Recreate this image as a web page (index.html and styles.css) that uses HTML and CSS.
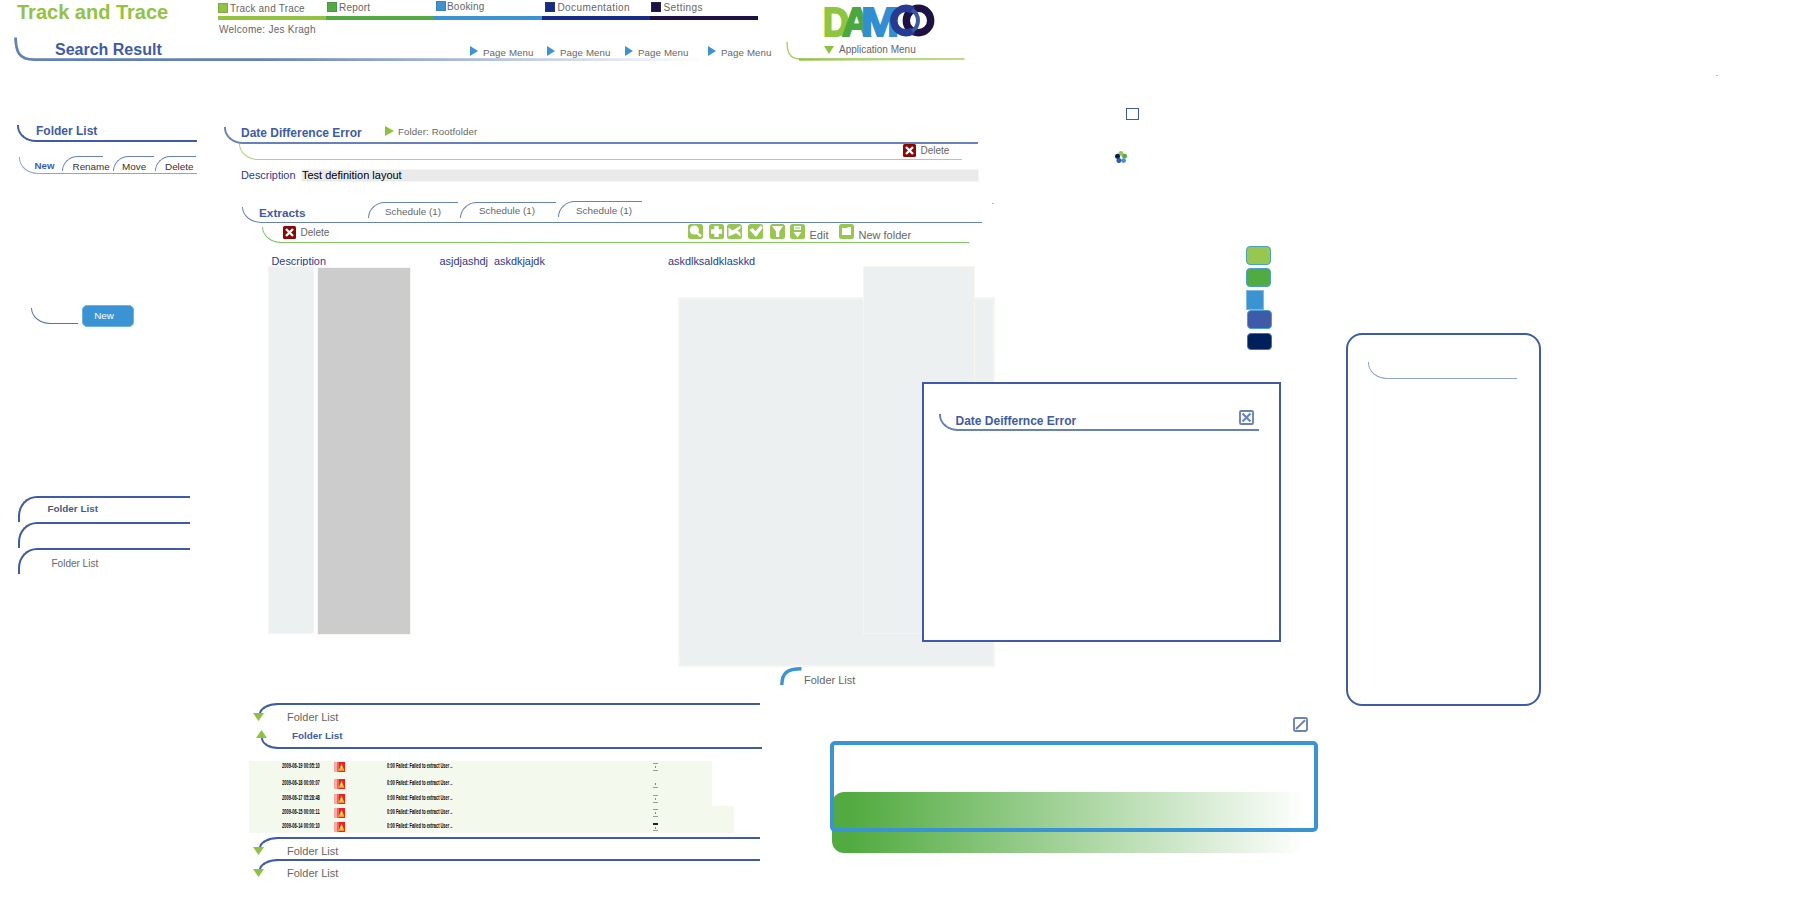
FILE: index.html
```html
<!DOCTYPE html>
<html lang="en">
<head>
<meta charset="utf-8">
<title>Track and Trace</title>
<link rel="stylesheet" href="styles.css">
</head>
<body>
<svg class="defs" width="0" height="0" aria-hidden="true">
  <defs>
    <symbol id="i-del" viewBox="0 0 13 13"><rect width="13" height="13" rx="1.5" fill="#900505"/><path d="M3 3l7 7M10 3l-7 7" stroke="#fff" stroke-width="2.4"/></symbol>
    <symbol id="i-alert" viewBox="0 0 11 10"><rect width="4" height="10" fill="#f9a8a4"/><rect x="3" width="3" height="10" fill="#f4625e"/><rect x="5" width="6" height="10" fill="#f41c1c"/><path d="M4.5 8.8L7.6 1.6 10.4 8.8z" fill="#fbb62d"/><path d="M7.5 4v2.6" stroke="#fff" stroke-width="1"/></symbol>
  </defs>
</svg>
<div class="board">
  <header class="header">
    <div class="head-left">
      <div class="head-top">
        <h1 class="brand">Track and Trace</h1>
        <div>
          <nav class="nav">
            <a class="nav-item n1"><i></i>Track and Trace</a>
            <a class="nav-item n2"><i></i>Report</a>
            <a class="nav-item n3"><i></i>Booking</a>
            <a class="nav-item n4"><i></i>Documentation</a>
            <a class="nav-item n5"><i></i>Settings</a>
          </nav>
          <p class="welcome">Welcome: Jes Kragh</p>
        </div>
      </div>
      <div class="search">
        <svg class="search-line" width="700" height="25" viewBox="0 0 700 25">
          <defs><linearGradient id="sl" gradientUnits="userSpaceOnUse" x1="240" y1="0" x2="690" y2="0"><stop offset="0" stop-color="#6480bb"/><stop offset="1" stop-color="#fff"/></linearGradient></defs>
          <path d="M1.5 0.5C2 15 5 22.5 20 22.6H246" fill="none" stroke="#6480bb" stroke-width="2.8"/>
          <rect x="246" y="21.2" width="454" height="2.8" fill="url(#sl)"/>
        </svg>
        <h2 class="search-title">Search Result</h2>
        <div class="page-menu">
          <a class="pm"><i></i>Page Menu</a>
          <a class="pm"><i></i>Page Menu</a>
          <a class="pm"><i></i>Page Menu</a>
          <a class="pm"><i></i>Page Menu</a>
        </div>
      </div>
    </div>
    <div class="head-app">
      <svg class="logo" width="114" height="34" viewBox="0 0 114 34" role="img" aria-label="DAMCO">
        <g class="logo-t">
          <text x="0" y="31.5" textLength="26" lengthAdjust="spacingAndGlyphs" fill="#8fc63f" stroke="#8fc63f">D</text>
          <text x="19" y="31.5" textLength="29" lengthAdjust="spacingAndGlyphs" fill="#4aa83f" stroke="#4aa83f">A</text>
          <text x="38" y="31.5" textLength="38" lengthAdjust="spacingAndGlyphs" fill="#2f8fd2" stroke="#2f8fd2">M</text>
        </g>
        <circle cx="95.500" cy="16.500" r="12.200" fill="none" stroke="#1d1145" stroke-width="7.400"/>
        <path d="M90 26.500A12.200 12.200 0 1 1 90 6.500" fill="none" stroke="#263c93" stroke-width="7.400"/>
        <path d="M89 6A12.200 12.200 0 0 1 89 27" fill="none" stroke="#3d57a7" stroke-width="4"/>
      </svg>
      <div class="app-menu">
        <svg class="app-line" width="180" height="20" viewBox="0 0 180 20">
          <defs><linearGradient id="al"><stop offset="0" stop-color="#8fc043"/><stop offset="1" stop-color="#b9da86" stop-opacity=".1"/></linearGradient></defs>
          <path d="M1 0C1.2 10 3 16.8 14 17H178.5" fill="none" stroke="#a5ce62" stroke-width="1.3"/>
          <rect x="13" y="16.5" width="150" height="2.2" fill="url(#al)"/>
        </svg>
        <i></i><span>Application Menu</span>
      </div>
    </div>
  </header>

  <div class="body">
    <aside class="side">
      <h3 class="rail side-title">Folder List</h3>
      <div class="rail side-tabs">
        <b class="side-new">New</b>
        <a class="cap st st1">Rename</a>
        <a class="cap st st2">Move</a>
        <a class="cap st st3">Delete</a>
      </div>
      <div class="new-row"><span class="rail new-rail"></span><button class="new-btn">New</button></div>
      <div class="cap fold fold-b">Folder List</div>
      <div class="cap fold"></div>
      <div class="cap fold fold-n">Folder List</div>
    </aside>

    <main class="main">
      <div class="rail def-title"><h3>Date Difference Error</h3><i class="tri-r"></i><span>Folder: Rootfolder</span></div>
      <div class="rail def-tools"><svg width="13" height="13"><use href="#i-del"/></svg><span>Delete</span></div>
      <div class="desc"><label>Description</label><span class="field">Test definition layout</span></div>
      <div class="rail ext"><h3>Extracts</h3>
        <a class="cap et et1">Schedule (1)</a><a class="cap et et2">Schedule (1)</a><a class="cap et et3">Schedule (1)</a>
      </div>
      <div class="rail ext-tools">
        <svg class="x" width="13" height="13"><use href="#i-del"/></svg><span class="x-label">Delete</span>
        <div class="icons">
          <svg class="ic" viewBox="0 0 15 15"><circle cx="6.3" cy="6" r="4.6"/><path d="M9 9l4 3.2" stroke="#fff" stroke-width="2.6"/></svg>
          <svg class="ic ic2" viewBox="0 0 15 15"><path d="M5.3 2h4.4v3.3H13v4.4H9.700V13H5.300V9.700H2V5.300h3.300z"/></svg>
          <svg class="ic ic3" viewBox="0 0 15 15"><path d="M13.500 1.500L5.500 6.500 13.500 12.500V9L10.500 6.500l3-2z"/><path d="M1.500 3.500v9l8-3.500z"/></svg>
          <svg class="ic ic4" viewBox="0 0 15 15"><path d="M1.500 6l3-2 3 3.300L12.500 1.500 15 3.500 8 13z"/></svg>
          <svg class="ic ic5" viewBox="0 0 15 15"><path d="M2 2h11L9.300 7.500V13H6V7.500z"/></svg>
          <svg class="ic ic6" viewBox="0 0 15 15"><path d="M4 2h7v4H4zM3.500 8h8L7.500 13.500z"/><path d="M5 4h5" stroke="#98c74f"/></svg>
          <span>Edit</span>
          <svg class="ic ic7" viewBox="0 0 15 15"><path d="M3 4h5l1-1h3v8H3z"/></svg>
          <span>New folder</span>
        </div>
      </div>
      <div class="cols"><span>Description</span><span>asjdjashdj&nbsp; askdkjajdk</span><span>askdlksaldklaskkd</span></div>
      <div class="blocks"><div class="blk"></div><div class="blk blk-grey"></div></div>

      <section class="acc">
        <div class="cap acc-h"><i class="tri-d"></i>Folder List</div>
        <div class="rail acc-open"><i class="tri-u"></i>Folder List</div>
        <div class="log">
          <div class="row"><span class="d"><em>2009-06-19 00:05:10</em></span><svg width="11" height="10"><use href="#i-alert"/></svg><span class="t"><em>0:00 Failed: Failed to extract User ..</em></span><span class="m"></span></div>
          <div class="row"><span class="d"><em>2009-06-18 00:00:07</em></span><svg width="11" height="10"><use href="#i-alert"/></svg><span class="t"><em>0:00 Failed: Failed to extract User ..</em></span><span class="m m2"></span></div>
          <div class="row"><span class="d"><em>2009-06-17 05:28:48</em></span><svg width="11" height="10"><use href="#i-alert"/></svg><span class="t"><em>0:00 Failed: Failed to extract User ..</em></span><span class="m"></span></div>
          <div class="row wide"><span class="d"><em>2009-06-15 00:00:11</em></span><svg width="11" height="10"><use href="#i-alert"/></svg><span class="t"><em>0:00 Failed: Failed to extract User ..</em></span><span class="m"></span></div>
          <div class="row wide"><span class="d"><em>2009-06-14 00:00:10</em></span><svg width="11" height="10"><use href="#i-alert"/></svg><span class="t"><em>0:00 Failed: Failed to extract User ..</em></span><span class="m m5"></span></div>
        </div>
        <div class="cap acc-h"><i class="tri-d"></i>Folder List</div>
        <div class="cap acc-h"><i class="tri-d"></i>Folder List</div>
      </section>
    </main>
  </div>

  <!-- Loose pieces on the free canvas -->
  <div class="pin area-wide"></div>
  <div class="pin area-tall"></div>
  <section class="pin dialog">
    <div class="rail dialog-head"><h3>Date Deiffernce Error</h3>
      <svg width="15" height="15" viewBox="0 0 15 15" fill="none" stroke="#6b82bf"><rect x="1" y="1" width="13" height="13" rx="1" stroke-width="1.900"/><path d="M3.500 3.500l8 8M11.500 3.500l-8 8" stroke-width="2.200"/></svg>
    </div>
  </section>
  <div class="pin checkbox"></div>
  <svg class="pin flower" width="12" height="12" viewBox="0 0 12 12"><circle cx="6" cy="2.500" r="2.500" fill="#98c74f"/><circle cx="9.600" cy="5.200" r="2.400" fill="#52ab40"/><circle cx="8.600" cy="9.600" r="2.400" fill="#3a93d3"/><circle cx="3.900" cy="9.600" r="2.500" fill="#3e5ba9"/><circle cx="2.500" cy="5.300" r="2.500" fill="#00205c"/></svg>
  <div class="pin swatches"><i class="s1"></i><i class="s2"></i><i class="s3"></i><i class="s4"></i><i class="s5"></i></div>
  <section class="pin panel"><div class="rail panel-rail"></div></section>
  <div class="pin chip"><svg width="22" height="18" viewBox="0 0 22 18"><path d="M1.800 18C2 6 7 1.800 21.500 1.800" fill="none" stroke="#3a93d3" stroke-width="3.400"/></svg><span>Folder List</span></div>
  <svg class="pin pencil" width="15" height="15" viewBox="0 0 15 15" fill="none" stroke="#6b82bf"><rect x="1" y="1" width="13" height="13" rx="1.500" stroke-width="1.900"/><path d="M3 12l9-8.800" stroke-width="1.900"/></svg>
  <div class="pin fade"></div>
  <div class="pin frame"></div>
  <i class="pin dot dot1"></i><i class="pin dot dot2"></i>
</div>
</body>
</html>
```
FILE: styles.css
```css
* { box-sizing: border-box; }
html, body { margin: 0; background: #fff; }
body { font-family: "Liberation Sans", Arial, sans-serif; font-size: 10px; line-height: 12px; color: #666; overflow: hidden; }
h1, h2, h3, p { margin: 0; }
a, span, b, label { white-space: nowrap; }
.defs { position: absolute; }
.board { position: relative; width: 1800px; height: 900px; overflow: hidden; }
.pin { position: absolute; }

/* curved rules: a rail runs along the bottom, a cap along the top */
.rail { border: 0 solid #6781bd; border-width: 0 0 2px 2px; border-bottom-left-radius: 19px 16px; display: flex; align-items: flex-start; }
.cap { border: 0 solid #3e5ba9; border-width: 2px 0 0 2px; border-top-left-radius: 19px 18px; display: block; }
h3 { font-size: 12px; line-height: 12px; color: #3e5ba9; white-space: nowrap; }

/* header */
.header { display: flex; height: 110px; }
.head-left { width: 786px; }
.head-top { display: flex; height: 37px; }
.brand { width: 218px; padding-left: 17px; font-size: 20px; line-height: 24px; color: #93c340; white-space: nowrap; }
.nav { display: grid; grid-template-columns: repeat(5, 108px); }
.nav-item { display: flex; gap: 2px; height: 20px; line-height: 11px; letter-spacing: .2px; border-bottom: 4px solid; border-color: var(--c); padding-top: 2px; }
.nav-item i { width: 10px; height: 10px; background: var(--c); box-shadow: inset 0 0 0 1px rgba(60, 90, 90, .25); }
.n1 { --c: #93c340; padding-top: 3px; }
.n2 { --c: #52ab40; padding-left: 1px; }
.n3 { --c: #3a93d3; padding: 1px 0 0 2px; }
.nav-item.n3 { gap: 1px; }
.n4 { --c: #182b85; padding-left: 3px; }
.n5 { --c: #1d1145; padding-left: 1px; }
.nav-item.n4, .nav-item.n5 { gap: 2.500px; letter-spacing: .4px; }
.welcome { padding: 3px 0 0 1px; letter-spacing: .26px; line-height: 13px; }
.search { position: relative; display: flex; margin-left: 14px; height: 25px; }
.search-line { position: absolute; left: 0; top: 0; }
.search-title { position: relative; width: 456px; padding: 3px 0 0 41px; font-size: 16px; line-height: 20px; color: #3e5ba9; }
.page-menu { position: relative; display: grid; grid-template-columns: 77px 78px 83px 70px; padding-top: 9px; }
.pm { display: flex; gap: 5px; font-size: 9.700px; letter-spacing: .12px; line-height: 14px; }
.pm i { width: 8px; height: 10px; background: #3a93d3; clip-path: polygon(0 0, 100% 50%, 0 100%); }
.head-app { width: 180px; padding-top: 4px; }
.logo { display: block; margin-left: 37px; overflow: visible; }
.logo-t { font: bold 41px "Liberation Sans", Arial, sans-serif; stroke-width: 2px; }
.app-menu { position: relative; display: flex; gap: 5px; margin-top: 4px; height: 20px; padding: 2px 0 0 38px; }
.app-menu i { margin-top: 2px; width: 10px; height: 8px; background: #8fc23c; clip-path: polygon(0 0, 100% 0, 50% 100%); }
.app-line { position: absolute; left: 0; top: 0; }

.body { display: flex; }

/* sidebar */
.side { width: 224px; padding-top: 15px; }
.side-title { margin-left: 17px; width: 180px; height: 17px; padding-left: 17px; border-color: #3e5ba9; }
.side-tabs { margin: 15px 0 0 19px; width: 178px; height: 17px; border-width: 0 0 1.500px 1.500px; border-color: #8fa3d0; padding-left: 14.500px; font-size: 9.900px; }
.side-new { width: 27px; padding-top: 2.500px; color: #3e5ba9; font-size: 9.700px; }
.st { flex: none; margin-top: -1px; height: 15px; padding: 4px 0 0 10px; border-width: 1.500px 0 0 1.500px; border-color: #6781bd; color: #333; }
.st1 { width: 41px; margin-right: 10px; }
.st2 { width: 41px; margin-right: 1.500px; padding-left: 8.500px; }
.st3 { width: 41px; padding-left: 9px; }
.new-row { display: flex; gap: 4px; margin: 131px 0 169px 31px; height: 22px; }
.new-rail { margin-top: 3px; width: 47px; height: 16px; border-width: 0 0 1px 1px; border-color: #5a6fb5; }
.new-btn { width: 52px; height: 22px; padding: 0 8px 0 0; border: 1px solid #6fb0dd; border-radius: 5px; background: #3a93d3; color: #fff; font: 9.800px/12px "Liberation Sans", Arial, sans-serif; }
.fold { margin-left: 18px; width: 172px; height: 26px; border-top-left-radius: 19px 20px; }
.fold-b { padding: 5px 0 0 27.500px; font-weight: bold; font-size: 9.900px; color: #4b597f; }
.fold-n { padding: 8px 0 0 31.500px; }

/* definition */
.main { width: 776px; padding-top: 17px; }
.def-title { width: 754px; height: 17px; padding-left: 15px; }
.def-title h3 { width: 144px; }
.tri-r { width: 9px; height: 10px; margin: -1px 4px 0 0; background: #8fc23c; clip-path: polygon(0 0, 100% 50%, 0 100%); }
.def-title span { margin-top: -1px; font-size: 9.700px; letter-spacing: .1px; }
.def-tools { margin-left: 15px; width: 723px; height: 16px; border-width: 0 0 1.500px 1.500px; border-color: #add477; padding-left: 663px; gap: 4.500px; }
.def-tools span { padding-top: 1px; }
.desc { display: flex; margin: 10px 0 0 17px; height: 11px; font-size: 11px; line-height: 11px; }
.desc label { width: 61px; font-size: 10.900px; color: #2b3990; }
.field { width: 676px; background: #eaeaea; color: #000; box-shadow: 0 0 0 1px #f6f6ee; }
.ext { margin: 26px 0 0 18px; width: 740px; height: 16px; border-width: 0 0 1.500px 1.500px; padding-left: 16px; }
.ext h3 { width: 109px; font-size: 11.800px; padding-top: 0; }
.et { flex: none; height: 16px; margin-top: -5px; border-width: 1.500px 0 0 1.500px; border-color: #6781bd; padding: 3px 0 0 16px; font-size: 9.900px; }
.et1 { width: 90px; margin-right: 2px; }
.et2 { width: 96px; margin-right: 2px; padding: 2px 0 0 18px; }
.et3 { width: 84px; margin-top: -6px; padding-left: 17px; }
.ext-tools { margin: 4px 0 0 38px; width: 707px; height: 16px; border-width: 0 0 1.500px 1.500px; border-color: #82c565; padding-left: 20px; }
.x { flex: none; margin-top: -1px; }
.x-label { flex: none; width: 391.500px; padding-left: 4.500px; }
.icons { display: flex; flex: none; margin-top: -3px; font-size: 11px; }
.icons span { padding: 5px 0 0 5px; }
.icons span:last-child { padding-left: 4px; }
.ic { flex: none; width: 15px; height: 15px; border-radius: 2.500px; background: #98c74f; fill: #fff; }
.ic2, .ic4 { margin-left: 6px; }
.ic3 { margin-left: 3px; }
.ic5 { margin-left: 7px; }
.ic6 { margin-left: 5px; }
.ic7 { margin-left: 11px; }
.cols { display: grid; grid-template-columns: 168px 228.500px 200px; margin: 11px 0 0 47.500px; height: 12px; font-size: 10.900px; line-height: 14px; color: #2b3990; }
.blocks { display: flex; gap: 3px; margin-left: 44px; height: 368px; }
.blk { width: 46px; height: 368px; background: #ecf0f1; border: 1px solid #f6f6f0; }
.blk-grey { width: 94px; background: #ccc; margin: 1px 0 -1px; }

/* accordion */
.acc { margin: 69px 0 0 35px; font-size: 11px; }
.tri-d, .tri-u { position: absolute; width: 11px; height: 8px; background: #8fc23c; }
.tri-d { left: -6px; top: 10px; clip-path: polygon(0 0, 100% 0, 50% 100%); }
.tri-u { left: -4px; top: 0; clip-path: polygon(0 100%, 100% 100%, 50% 0); }
.acc-h { position: relative; width: 501px; height: 22px; padding: 8px 0 0 28px; border: 0; border-radius: 0; background: linear-gradient(#3e5ba9, #3e5ba9) 17px 0 / 100% 2px no-repeat; }
.acc-h::before { content: ""; position: absolute; left: 0; top: 0; width: 20px; height: 10px; border: solid #3e5ba9; border-width: 2px 0 0 2px; border-top-left-radius: 19px 11px; }
.acc-open { position: relative; width: 502px; margin-left: 1px; height: 19px; margin-top: 5px; padding: 0 0 0 32px; font-size: 9.900px; font-weight: bold; color: #3e5ba9; border: 0; border-radius: 0; background: linear-gradient(#3e5ba9, #3e5ba9) 17px 100% / 100% 2px no-repeat; }
.acc-open::before { content: ""; position: absolute; left: 1px; bottom: 0; width: 20px; height: 11px; border: solid #3e5ba9; border-width: 0 0 2px 2px; border-bottom-left-radius: 17px 11px; }
.log { margin: 12px 0 4px -10px; }
.row { display: flex; align-items: center; width: 463px; height: 15px; background: #f4f9ee; padding-left: 33px; color: #000; }
.row:nth-child(1) { padding-bottom: 3px; }
.row:nth-child(4) { height: 14px; }
.row:nth-child(5) { height: 13px; }
.wide { width: 485px; }
.row em { display: block; width: max-content; transform-origin: 0 50%; font: bold 6.500px/8px "Liberation Sans", Arial, sans-serif; }
.d { width: 52px; height: 10px; }
.d em { transform: scaleX(.62); }
.t { width: 266px; height: 10px; margin-left: 42px; }
.t em { transform: scaleX(.6); }
.row svg { flex: none; }
.m { width: 5px; height: 8px; border: solid #999; border-width: 1px 0; background: linear-gradient(#888, #888) 2px 2px / 1px 2px no-repeat; }
.m2 { border-top-color: transparent; }
.m5 { border-top: 2px solid #222; }

/* loose pieces */
.area-wide { left: 678px; top: 297px; width: 317px; height: 370px; background: #ecf0f1; border: 2px solid #f6f6f0; }
.area-tall { left: 863px; top: 266px; width: 112px; height: 368px; background: #ecf0f1; border: 1px solid #f6f6ea; }
.dialog { left: 922px; top: 382px; width: 359px; height: 260px; padding: 30px 0 0 15px; background: #fff; border: 2px solid #3e5ba9; }
.dialog-head { width: 320px; height: 17px; padding-left: 14.500px; justify-content: space-between; }
.dialog-head h3 { padding-top: 1px; }
.dialog-head svg { margin: -4px 5px 0 0; }
.checkbox { left: 1126px; top: 108px; width: 13px; height: 12px; border: 1px solid #3e5ba9; }
.flower { left: 1115px; top: 151px; }
.swatches { left: 1246px; top: 246px; width: 28px; display: flex; flex-direction: column; }
.swatches i { width: 25px; height: 19px; border: 1px solid #4ba0c8; border-radius: 4px; }
.swatches .s1 { background: #98c74f; }
.swatches .s2 { background: #52ab40; margin-top: 3px; }
.swatches .s3 { background: #3a93d3; margin-top: 3px; width: 18px; height: 20px; border-radius: 0; border-color: #7fb8e0; }
.swatches .s4 { background: #3e5ba9; margin-left: 1px; }
.swatches .s5 { background: #00205c; margin: 4px 0 0 1px; height: 17px; border-color: #2d78b8; }
.panel { left: 1346px; top: 333px; width: 195px; height: 373px; border: 2px solid #3e5ba9; border-radius: 16px; padding: 27px 0 0 20px; }
.panel-rail { width: 149px; height: 17px; border-width: 0 0 1.500px 1px; border-color: #8fa3d0; }
.chip { left: 780px; top: 667px; display: flex; gap: 2px; font-size: 11px; }
.chip span { padding-top: 7px; }
.pencil { left: 1293px; top: 717px; }
.fade { left: 832px; top: 792px; width: 484px; height: 61px; border-radius: 12px 0 0 12px; background: linear-gradient(90deg, #52ab40 4%, #fff 98%); }
.frame { left: 830px; top: 741px; width: 488px; height: 91px; border: 4px solid #3a93d3; border-radius: 5px; }
.dot { width: 2px; height: 1px; background: #bbb; }
.dot1 { left: 1716px; top: 75px; }
.dot2 { left: 992px; top: 203px; }
```
